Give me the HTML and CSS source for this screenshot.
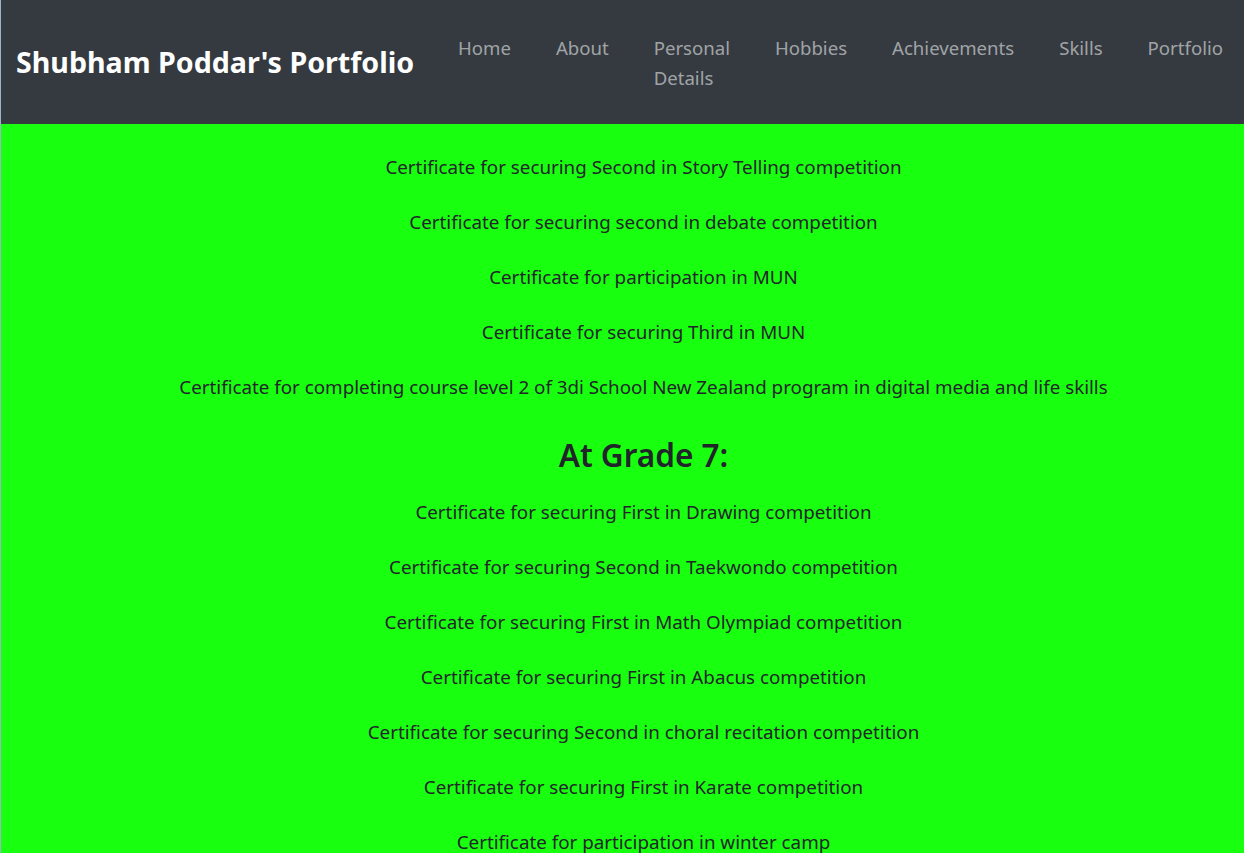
FILE: index.html
```html
<!DOCTYPE html>
<html lang="en">
<head>
<meta charset="utf-8">
<title>Shubham Poddar's Portfolio</title>
<link rel="stylesheet" href="styles.css">
</head>
<body>
<header class="navbar">
  <a class="brand" href="#">Shubham Poddar's Portfolio</a>
  <ul class="nav">
    <li><a href="#">Home</a></li>
    <li><a href="#">About</a></li>
    <li><a class="wrap" href="#">Personal Details</a></li>
    <li><a href="#">Hobbies</a></li>
    <li><a href="#">Achievements</a></li>
    <li><a href="#">Skills</a></li>
    <li><a href="#">Portfolio</a></li>
  </ul>
</header>
<main class="content">
  <p>Certificate for securing Second in Story Telling competition</p>
  <p>Certificate for securing second in debate competition</p>
  <p>Certificate for participation in MUN</p>
  <p>Certificate for securing Third in MUN</p>
  <p>Certificate for completing course level 2 of 3di School New Zealand program in digital media and life skills</p>
  <h3>At Grade 7:</h3>
  <p>Certificate for securing First in Drawing competition</p>
  <p>Certificate for securing Second in Taekwondo competition</p>
  <p>Certificate for securing First in Math Olympiad competition</p>
  <p>Certificate for securing First in Abacus competition</p>
  <p>Certificate for securing Second in choral recitation competition</p>
  <p>Certificate for securing First in Karate competition</p>
  <p>Certificate for participation in winter camp</p>
</main>
</body>
</html>
```

FILE: styles.css
```css
* { box-sizing: border-box; }
html, body { margin: 0; padding: 0; }
body {
  font-family: "Noto Sans", "Open Sans", sans-serif;
  font-size: 18.8px;
  line-height: 30px;
  color: #212529;
  background: #18ff10;
  border-left: 1px solid #9fb3c8;
  min-height: 853px;
}
.navbar {
  display: flex;
  align-items: center;
  justify-content: space-between;
  height: 124px;
  background: #343a40;
  padding: 0 21px 0 15px;
}
.brand {
  color: #fff;
  font-weight: 700;
  font-size: 28.6px;
  text-decoration: none;
  white-space: nowrap;
}
.nav {
  display: flex;
  list-style: none;
  margin: 0;
  padding: 2px 0 0;
  gap: 45px;
  font-size: 18.6px;
}
.nav a {
  display: block;
  color: rgba(255,255,255,0.55);
  text-decoration: none;
  white-space: nowrap;
}
.nav a.wrap { white-space: normal; width: min-content; }
.content {
  padding: 28px 0 0 42px;
  text-align: center;
}
.content p { margin: 0 0 25px; }
.content h3 {
  font-size: 31.5px;
  font-weight: 600;
  line-height: 40px;
  margin: 33px 0 22px;
}
```
